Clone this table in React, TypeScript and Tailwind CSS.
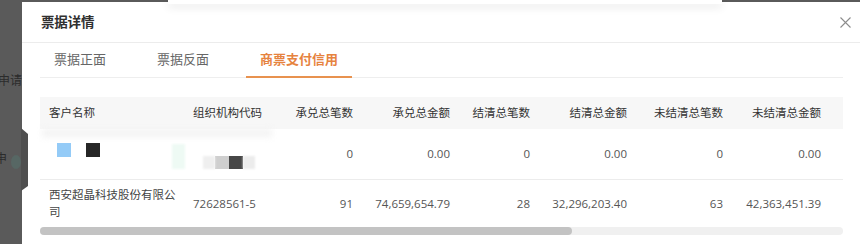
import React from "react";

const font = { fontFamily: '"Open Sans", "Noto Sans CJK SC", sans-serif' };

type Row = {
  name: React.ReactNode;
  code: React.ReactNode;
  v: string[];
};

const headers = ["承兑总笔数", "承兑总金额", "结清总笔数", "结清总金额", "未结清总笔数", "未结清总金额"];

export default function App() {
  const rows: Row[] = [
    {
      name: (
        <div className="relative h-[34px]">
          <div className="flex items-start gap-[15px] pl-[17px] pt-[6px]">
            <div className="w-[14px] h-[14px] bg-[#94cbf7]" />
            <div className="w-[14px] h-[14px] bg-[#262626]" />
          </div>
          <div className="absolute left-[132px] top-[7px] w-[13px] h-[25px] bg-[#eefaf4] blur-[1px]" />
        </div>
      ),
      code: (
        <div className="flex items-center pl-[18px] pt-[17px] h-[34px]">
          <div className="w-[12px] h-[13px] bg-[#efefef] blur-[1px]" />
          <div className="w-[14px] h-[13px] bg-[#cfcfcf]" />
          <div className="w-[14px] h-[13px] bg-[#474747]" />
          <div className="w-[12px] h-[13px] bg-[#ececec] blur-[1px]" />
        </div>
      ),
      v: ["0", "0.00", "0", "0.00", "0", "0.00"],
    },
    {
      name: <div className="pl-[9px] pr-[6px] leading-[17px] text-[#444]">西安超晶科技股份有限公司</div>,
      code: <div className="pl-[8px] text-[#555]">72628561-5</div>,
      v: ["91", "74,659,654.79", "28", "32,296,203.40", "63", "42,363,451.39"],
    },
  ];

  return (
    <div className="relative w-[860px] h-[244px] overflow-hidden bg-[#5a5a5a] flex" style={font}>
      {/* page beneath overlay */}
      <div className="w-[22px] shrink-0 overflow-hidden text-[#2b2b2b] text-[12px] leading-[14px]">
        <div className="mt-[74px] -ml-[2px] whitespace-nowrap">申请</div>
        <div className="mt-[64px] -ml-[5px] whitespace-nowrap">申</div>
      </div>

      {/* modal */}
      <div className="mt-[2px] w-[839px] shrink-0 bg-white flex flex-col">
        <div className="h-[41px] flex items-center justify-between pl-[19px] pr-[10px] border-b border-[#ececec]">
          <span className="text-[13.5px] font-semibold text-[#303030] tracking-[-0.2px]">票据详情</span>
          <svg width="11" height="11" viewBox="0 0 11 11" className="text-[#8c8c8c]">
            <path d="M0.5 0.5 L10.5 10.5 M10.5 0.5 L0.5 10.5" stroke="currentColor" strokeWidth="1.1" fill="none" />
          </svg>
        </div>

        <div className="px-[18px]">
          <div className="flex gap-[23px] border-b border-[#eeeeee] h-[35px]">
            <div className="px-[14px] flex items-center text-[13px] text-[#666]">票据正面</div>
            <div className="px-[14px] flex items-center text-[13px] text-[#666]">票据反面</div>
            <div className="relative px-[14px] flex items-center text-[13px] font-semibold text-[#e6833f]">
              商票支付信用
              <div className="absolute left-0 right-0 -bottom-[1px] h-[2px] bg-[#e8924f]" />
            </div>
          </div>

          <div className="mt-[19px] w-[803px] overflow-hidden">
            <table className="table-fixed border-collapse text-[11.5px] w-[1213px]">
              <colgroup>
                <col className="w-[145px]" />
                <col className="w-[96px]" />
                <col className="w-[80px]" />
                <col className="w-[97px]" />
                <col className="w-[80px]" />
                <col className="w-[97px]" />
                <col className="w-[96px]" />
                <col className="w-[98px]" />
                <col />
              </colgroup>
              <thead>
                <tr className="h-[32px] bg-[#f7f7f7] text-[#333]">
                  <th className="text-left font-normal pl-[9px]">客户名称</th>
                  <th className="text-left font-normal pl-[8px]">组织机构代码</th>
                  {headers.map((h) => (
                    <th key={h} className="text-right font-normal pr-[8px]">
                      {h}
                    </th>
                  ))}
                  <th />
                </tr>
              </thead>
              <tbody className="text-[#555]">
                {rows.map((r, i) => (
                  <tr key={i} className={i === 0 ? "h-[50px] border-b border-[#ececec]" : "h-[48px]"}>
                    <td className="p-0 align-middle">{r.name}</td>
                    <td className="p-0 align-middle">{r.code}</td>
                    {r.v.map((x, j) => (
                      <td key={j} className="text-right pr-[8px] align-middle">
                        {x}
                      </td>
                    ))}
                    <td />
                  </tr>
                ))}
              </tbody>
            </table>
            <div className="h-[8px] bg-[#f0f0f0] rounded-[4px]">
              <div className="h-[8px] w-[532px] bg-[#c3c3c3] rounded-[4px]" />
            </div>
          </div>
        </div>
      </div>

      {/* top popup overlapping */}
      <div className="absolute left-[168px] top-0 w-[554px] h-[4px] bg-white shadow-[0_3px_8px_rgba(0,0,0,0.12)]" />
      {/* faint blur over first row */}
      <div className="absolute left-[42px] top-[129px] w-[230px] h-[8px] bg-[#f3f3f3] blur-[3px]" />
      {/* side tab shape from the page */}
      <svg className="absolute left-0 top-0" width="40" height="244">
        <polygon points="21,128 28,134 28,186 21,191" fill="#4f4f4f" />
        <ellipse cx="16" cy="162" rx="5" ry="7" fill="#55706a" opacity="0.6" />
      </svg>
    </div>
  );
}
